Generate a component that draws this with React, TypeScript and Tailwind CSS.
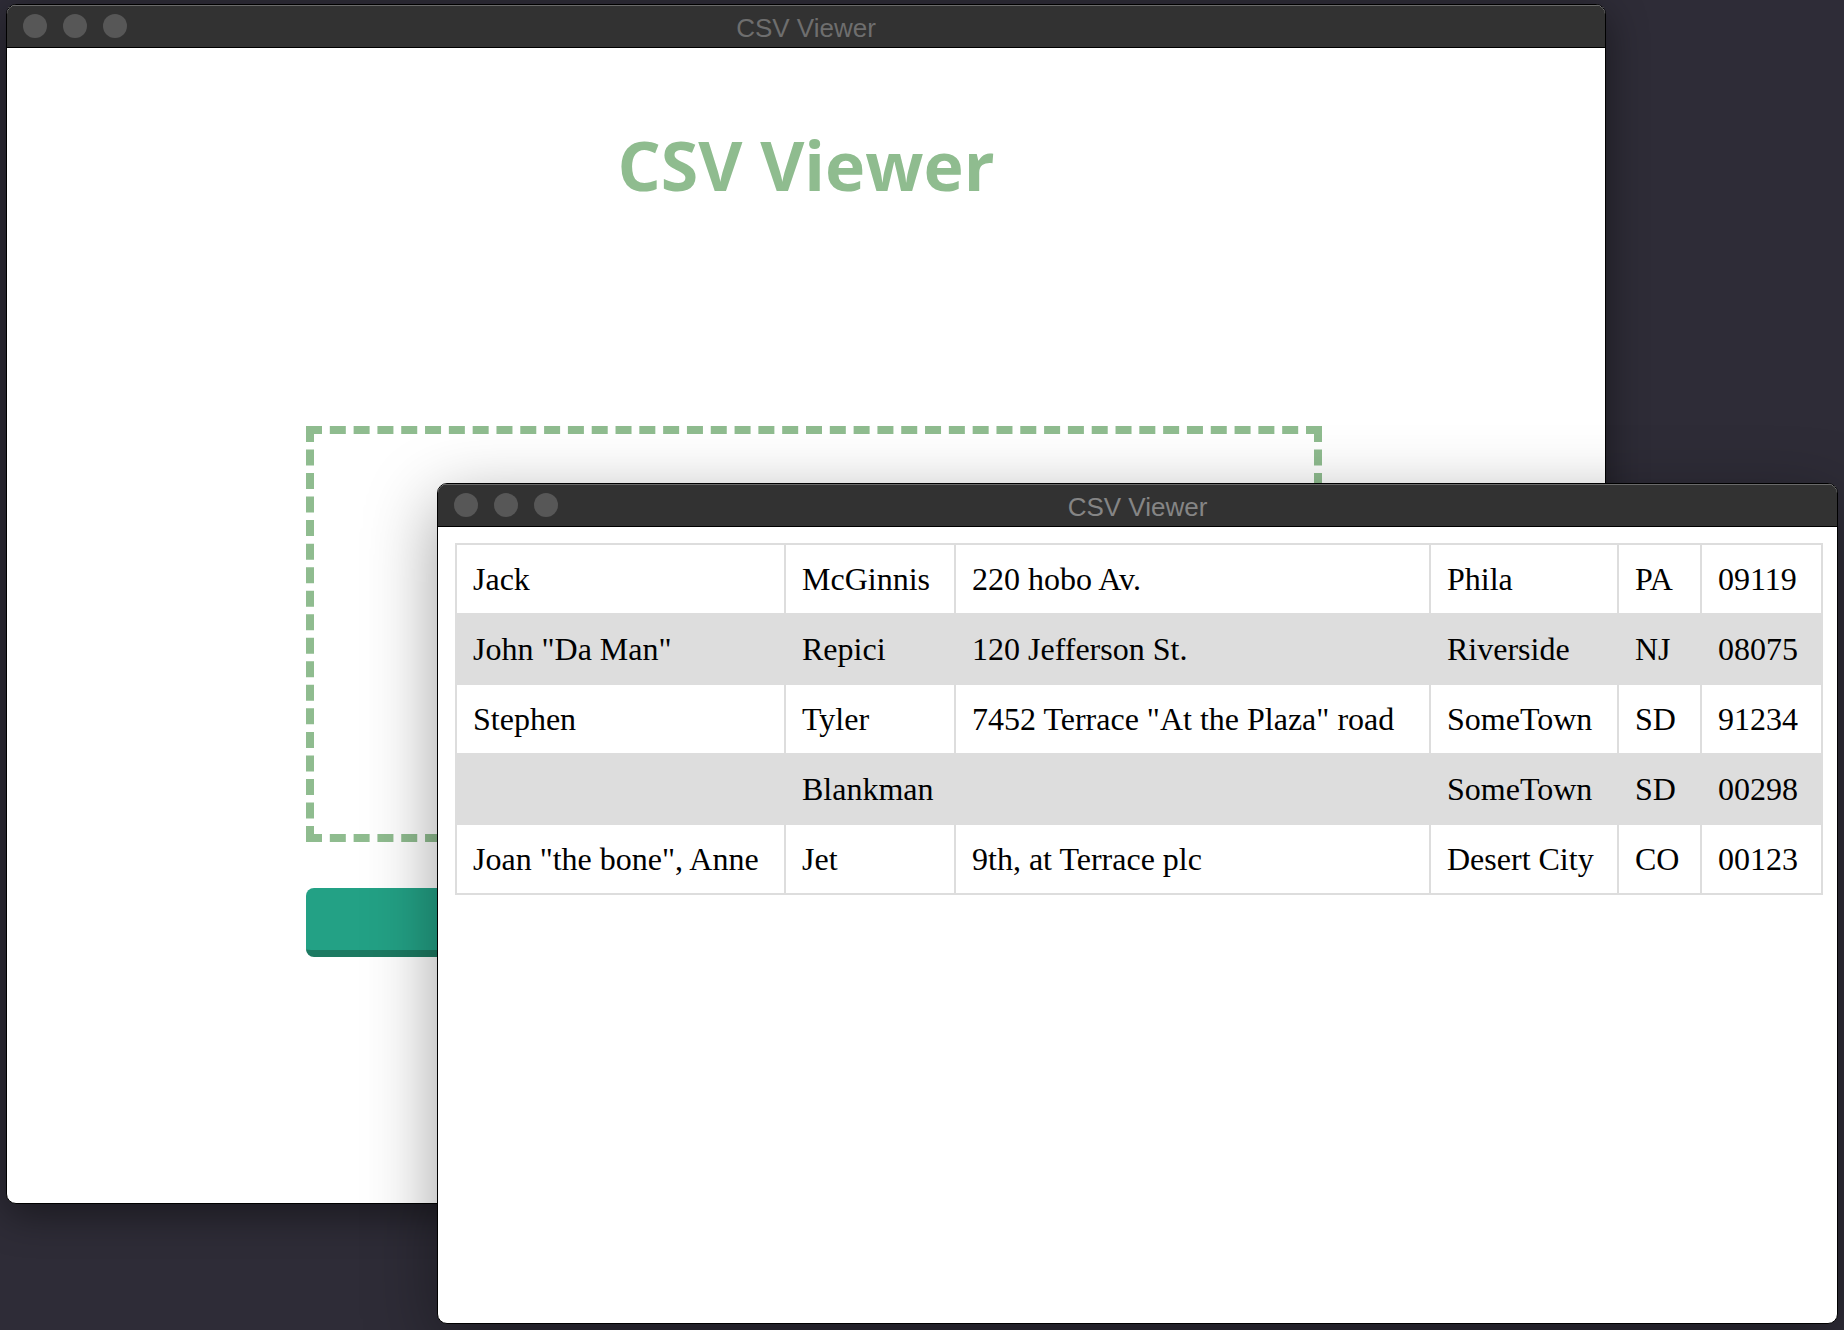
import React from 'react';

type Row = string[];

const rows: Row[] = [
  ['Jack', 'McGinnis', '220 hobo Av.', 'Phila', 'PA', '09119'],
  ['John "Da Man"', 'Repici', '120 Jefferson St.', 'Riverside', 'NJ', '08075'],
  ['Stephen', 'Tyler', '7452 Terrace "At the Plaza" road', 'SomeTown', 'SD', '91234'],
  ['', 'Blankman', '', 'SomeTown', 'SD', '00298'],
  ['Joan "the bone", Anne', 'Jet', '9th, at Terrace plc', 'Desert City', 'CO', '00123'],
];

const colWidths = ['w-[329px]', 'w-[170px]', 'w-[475px]', 'w-[188px]', 'w-[83px]', 'w-[121px]'];

// macOS-style title bar with the three grey dots
const TitleBar: React.FC<{ title: string; textColor: string }> = ({ title, textColor }) => (
  <div className="relative flex items-center h-[43px] shrink-0 bg-[#323232] border-b border-black shadow-[inset_0_1px_0_#6a6a6a]">
    <div className="flex gap-4 pl-[16px]">
      <span className="w-6 h-6 rounded-full bg-[#575757]" />
      <span className="w-6 h-6 rounded-full bg-[#575757]" />
      <span className="w-6 h-6 rounded-full bg-[#575757]" />
    </div>
    <span
      className={`absolute inset-x-0 top-[2px] text-center text-[26px] leading-[42px] ${textColor}`}
      style={{ fontFamily: '"Liberation Sans", Arial, sans-serif' }}
    >
      {title}
    </span>
  </div>
);

const UploadWindow: React.FC = () => (
  <div className="absolute left-[6px] top-[4px] w-[1600px] h-[1200px] flex flex-col rounded-[10px] overflow-hidden border border-black bg-white shadow-[0_10px_40px_rgba(0,0,0,0.45)]">
    <TitleBar title="CSV Viewer" textColor="text-[#6e6e6e]" />
    <div className="flex flex-col">
      <h1
        className="mt-[66px] text-center text-[68px] font-bold text-[#8fbc8f]"
        style={{ fontFamily: '"Open Sans", "Noto Sans", sans-serif' }}
      >
        CSV Viewer
      </h1>
      <div className="ml-[299px] w-[1016px] mt-[210px]">
        {/* drop zone */}
        <div className="h-[416px] border-8 border-dashed border-[#8fbc8f]" />
        {/* load button (mostly hidden behind the table window) */}
        <div className="mt-[46px] h-[69px] rounded-[8px] bg-[#23a185] border-b-[7px] border-[#1c7a62]" />
      </div>
    </div>
  </div>
);

const TableWindow: React.FC = () => (
  <div className="absolute left-[437px] top-[483px] w-[1401px] h-[841px] flex flex-col rounded-[10px] overflow-hidden border border-black bg-white shadow-[0_20px_70px_rgba(0,0,0,0.38)]">
    <TitleBar title="CSV Viewer" textColor="text-[#858585]" />
    <div className="pt-[16px] pl-[17px]">
      <table
        className="table-fixed border-collapse w-[1366px] text-[32px] leading-[36px] text-black"
        style={{ fontFamily: '"Liberation Serif", "Times New Roman", serif' }}
      >
        <colgroup>
          {colWidths.map((w, i) => (
            <col key={i} className={w} />
          ))}
        </colgroup>
        <tbody>
          {rows.map((r, i) => (
            <tr key={i} className={i % 2 === 1 ? 'bg-[#dddddd]' : 'bg-white'}>
              {r.map((c, j) => (
                <td key={j} className="border-2 border-[#dddddd] px-4 py-4 whitespace-nowrap">
                  {c}
                </td>
              ))}
            </tr>
          ))}
        </tbody>
      </table>
    </div>
  </div>
);

export default function App() {
  return (
    <div className="relative w-[1844px] h-[1330px] overflow-hidden bg-[#2e2c37]">
      <UploadWindow />
      <TableWindow />
    </div>
  );
}
